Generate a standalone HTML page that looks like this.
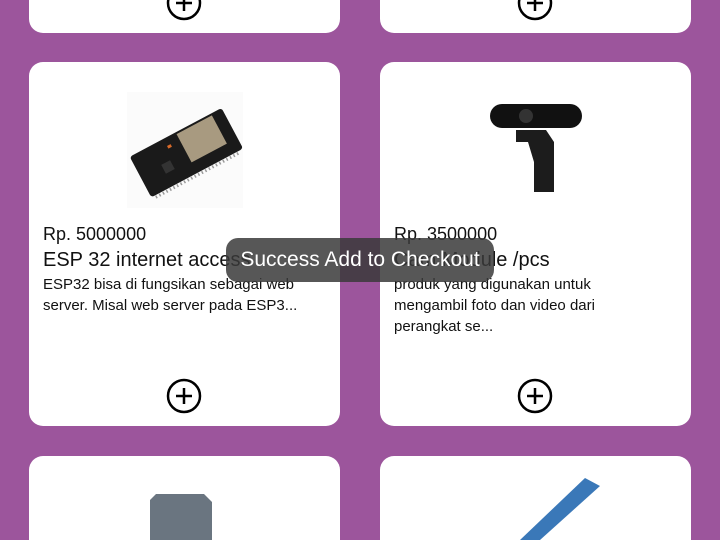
<!DOCTYPE html>
<html><head><meta charset="utf-8"><style>
*{margin:0;padding:0;box-sizing:border-box}
html,body{width:720px;height:540px;overflow:hidden}
body{background:#9c559c;font-family:"Liberation Sans",sans-serif;position:relative}
.card{position:absolute;background:#fff;border-radius:14px;width:311px}
.t{position:absolute;color:#111;white-space:nowrap}
.p{font-size:18px}
.n{font-size:20px}
.d{font-size:15px;line-height:21px}
.plus{position:absolute}
.toast{position:absolute;left:226px;top:238px;width:268px;height:44px;border-radius:12px;background:rgba(58,58,58,0.85);color:#fff;font-size:21px;text-align:center;line-height:44px}
</style></head><body>
<div class="card" style="left:29px;top:0;height:33px;border-radius:0 0 14px 14px"></div>
<div class="card" style="left:380px;top:0;height:33px;border-radius:0 0 14px 14px"></div>
<svg class="plus" style="left:166px;top:0" width="36" height="21" viewBox="0 15 36 21"><circle cx="18" cy="18" r="16" fill="none" stroke="#000" stroke-width="2.5"/><path d="M18 10v16M10 18h16" stroke="#000" stroke-width="2.5"/></svg>
<svg class="plus" style="left:517px;top:0" width="36" height="21" viewBox="0 15 36 21"><circle cx="18" cy="18" r="16" fill="none" stroke="#000" stroke-width="2.5"/><path d="M18 10v16M10 18h16" stroke="#000" stroke-width="2.5"/></svg>

<div class="card" style="left:29px;top:62px;height:364px"></div>
<div class="card" style="left:380px;top:62px;height:364px"></div>
<div class="card" style="left:29px;top:456px;height:84px;border-radius:14px 14px 0 0"></div>
<div class="card" style="left:380px;top:456px;height:84px;border-radius:14px 14px 0 0"></div>

<svg style="position:absolute;left:127px;top:92px" width="116" height="116" viewBox="0 0 116 116">
<rect width="116" height="116" fill="#fbfbfb"/>
<g transform="rotate(-28 58 58)">
<rect x="6" y="38" width="104" height="46" rx="3" fill="#1a1a1a"/>
<rect x="58" y="40" width="40" height="32" fill="#a89a80"/>
<rect x="44" y="46" width="4" height="3" fill="#d86a2a"/>
<rect x="30" y="60" width="10" height="10" fill="#333"/>
<path d="M10 86h96" stroke="#999" stroke-width="3" stroke-dasharray="1.5 2.5"/>
</g></svg>
<svg style="position:absolute;left:490px;top:104px" width="112" height="92" viewBox="0 0 112 92">
<rect x="0" y="0" width="92" height="24" rx="12" fill="#111"/>
<circle cx="36" cy="12" r="7" fill="#333"/>
<path d="M26 26h30l8 12v50H44V58l-6-20H26z" fill="#1c1c1c"/>
</svg>
<svg style="position:absolute;left:148px;top:490px" width="70" height="50" viewBox="0 0 70 50"><path d="M8 4h48l8 8v38H2V10z" fill="#6a7580"/></svg>
<svg style="position:absolute;left:465px;top:470px" width="142" height="70" viewBox="0 0 142 70"><path d="M120 8l15 8-60 54H55z" fill="#3a78b8"/></svg>

<div class="t p" style="left:43px;top:224px">Rp. 5000000</div>
<div class="t n" style="left:43px;top:249px">ESP 32 internet access</div>
<div class="t d" style="left:43px;top:274px">ESP32 bisa di fungsikan sebagai web<br>server. Misal web server pada ESP3...</div>

<div class="t p" style="left:394px;top:224px">Rp. 3500000</div>
<div class="t n" style="left:394px;top:249px">Cam Module /pcs</div>
<div class="t d" style="left:394px;top:274px">produk yang digunakan untuk<br>mengambil foto dan video dari<br>perangkat se...</div>

<svg class="plus" style="left:166px;top:378px" width="36" height="36" viewBox="0 0 36 36"><circle cx="18" cy="18" r="16" fill="none" stroke="#000" stroke-width="2.5"/><path d="M18 10v16M10 18h16" stroke="#000" stroke-width="2.5"/></svg>
<svg class="plus" style="left:517px;top:378px" width="36" height="36" viewBox="0 0 36 36"><circle cx="18" cy="18" r="16" fill="none" stroke="#000" stroke-width="2.5"/><path d="M18 10v16M10 18h16" stroke="#000" stroke-width="2.5"/></svg>

<div class="toast">Success Add to Checkout</div>
</body></html>
